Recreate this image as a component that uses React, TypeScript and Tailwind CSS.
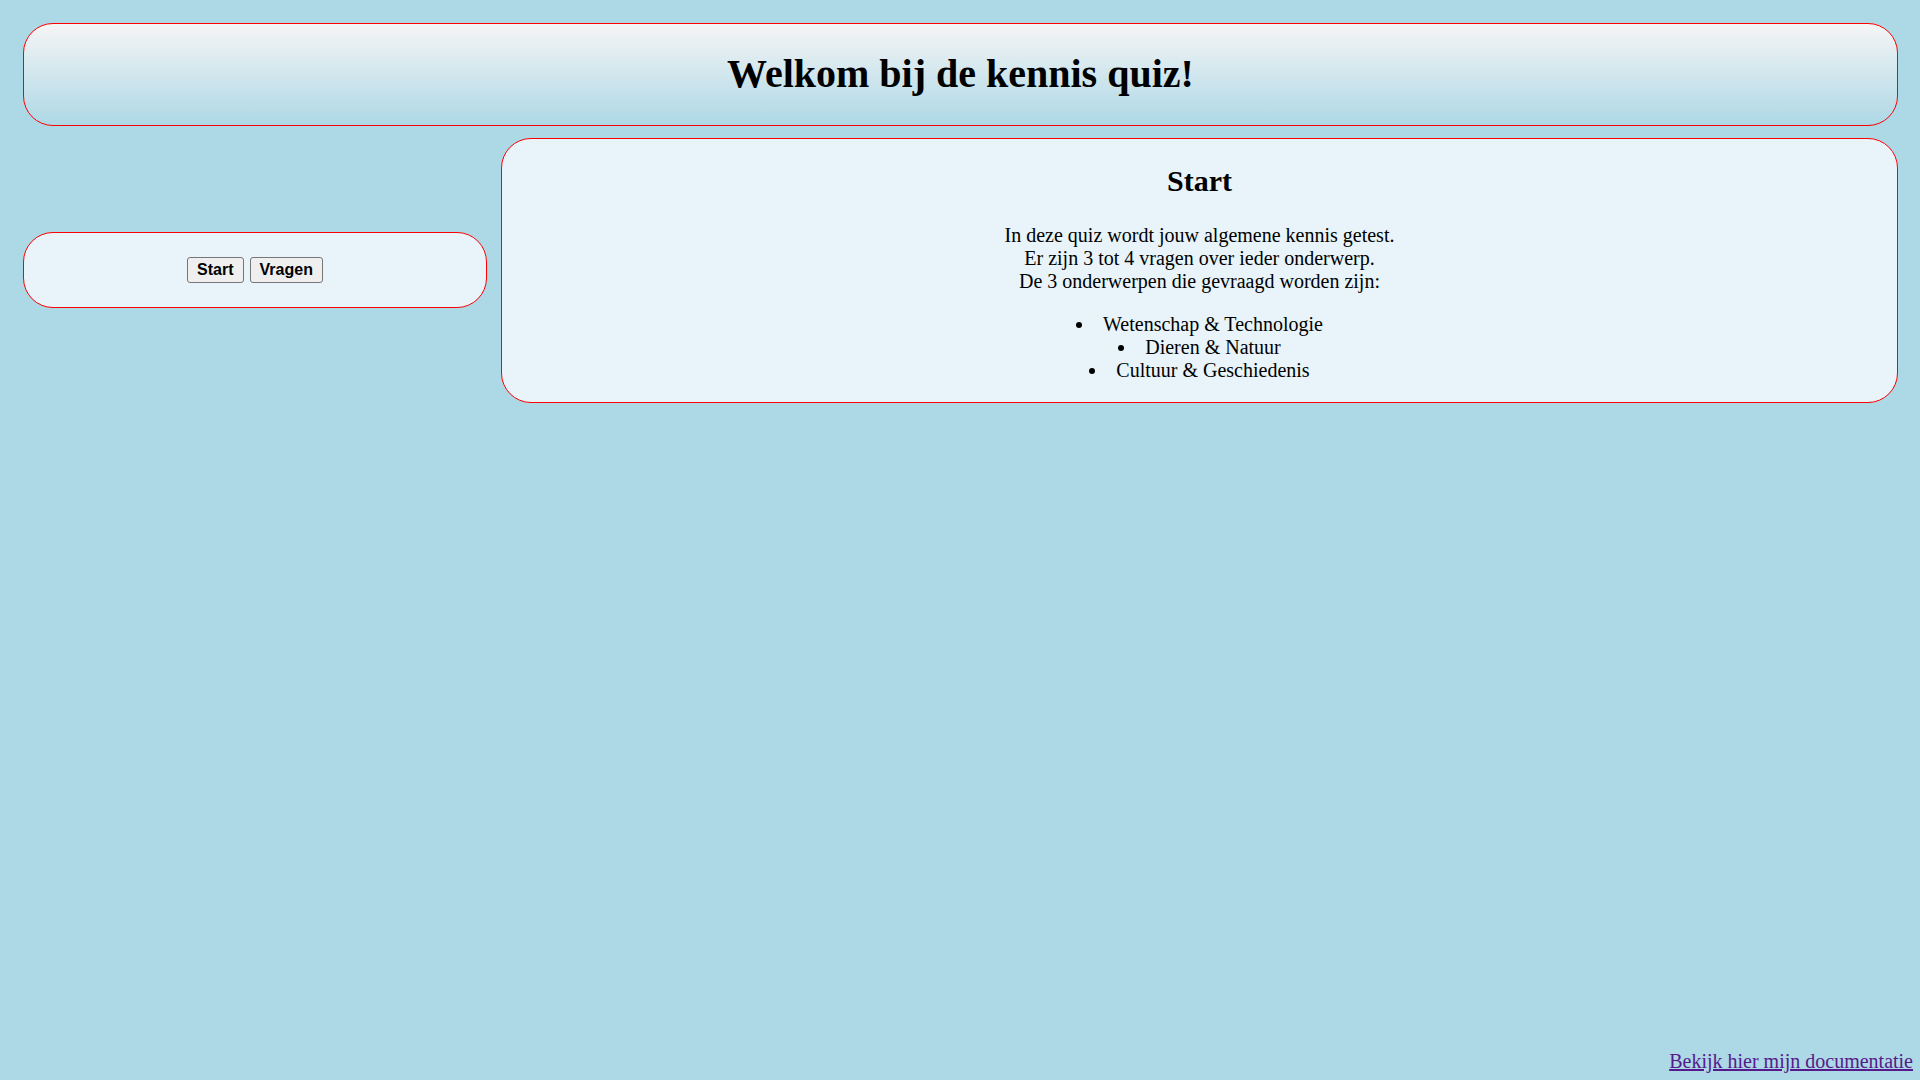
export default function App() {
  return (
    <div className="min-h-screen bg-[#add8e6] flex flex-col text-black font-['Liberation_Serif','Times_New_Roman',serif] text-[20px]">
      <header className="mt-[23px] ml-[23px] mr-[22px] border border-[#ff0000] rounded-[30px] bg-gradient-to-b from-[#f5f5f5] to-[#add8e6] text-center">
        <h1 className="text-[40px] font-bold mt-[27px] mb-[28px] leading-[1.15]">Welkom bij de kennis quiz!</h1>
      </header>

      <div className="mt-[12px] ml-[23px] mr-[22px] flex items-center gap-[14px]">
        <nav className="w-[464px] h-[76px] shrink-0 border border-[#ff0000] rounded-[30px] bg-[#e8f4f9] flex items-center justify-center">
          <div className="flex gap-[6px] font-['Liberation_Sans',Arial,sans-serif] text-[16px] font-bold">
            <button className="px-[9px] py-[3px] leading-[1.15] bg-[#efefef] border border-[#767676] rounded-[3px]">Start</button>
            <button className="px-[9px] py-[3px] leading-[1.15] bg-[#efefef] border border-[#767676] rounded-[3px]">Vragen</button>
          </div>
        </nav>

        <main className="flex-1 border border-[#ff0000] rounded-[30px] bg-[#e8f4f9] text-center">
          <h2 className="text-[30px] font-bold leading-[1.15] mt-[25px] mb-[25px]">Start</h2>
          <p className="leading-[23px]">
            In deze quiz wordt jouw algemene kennis getest.
            <br />
            Er zijn 3 tot 4 vragen over ieder onderwerp.
            <br />
            De 3 onderwerpen die gevraagd worden zijn:
          </p>
          <ul className="list-disc list-inside leading-[23px] mt-[20px] mb-[20px]">
            <li>Wetenschap &amp; Technologie</li>
            <li>Dieren &amp; Natuur</li>
            <li>Cultuur &amp; Geschiedenis</li>
          </ul>
        </main>
      </div>

      <a href="#" className="mt-auto self-end mr-[7px] mb-[7px] text-[#551a8b] underline leading-[23px]">
        Bekijk hier mijn documentatie
      </a>
    </div>
  );
}
